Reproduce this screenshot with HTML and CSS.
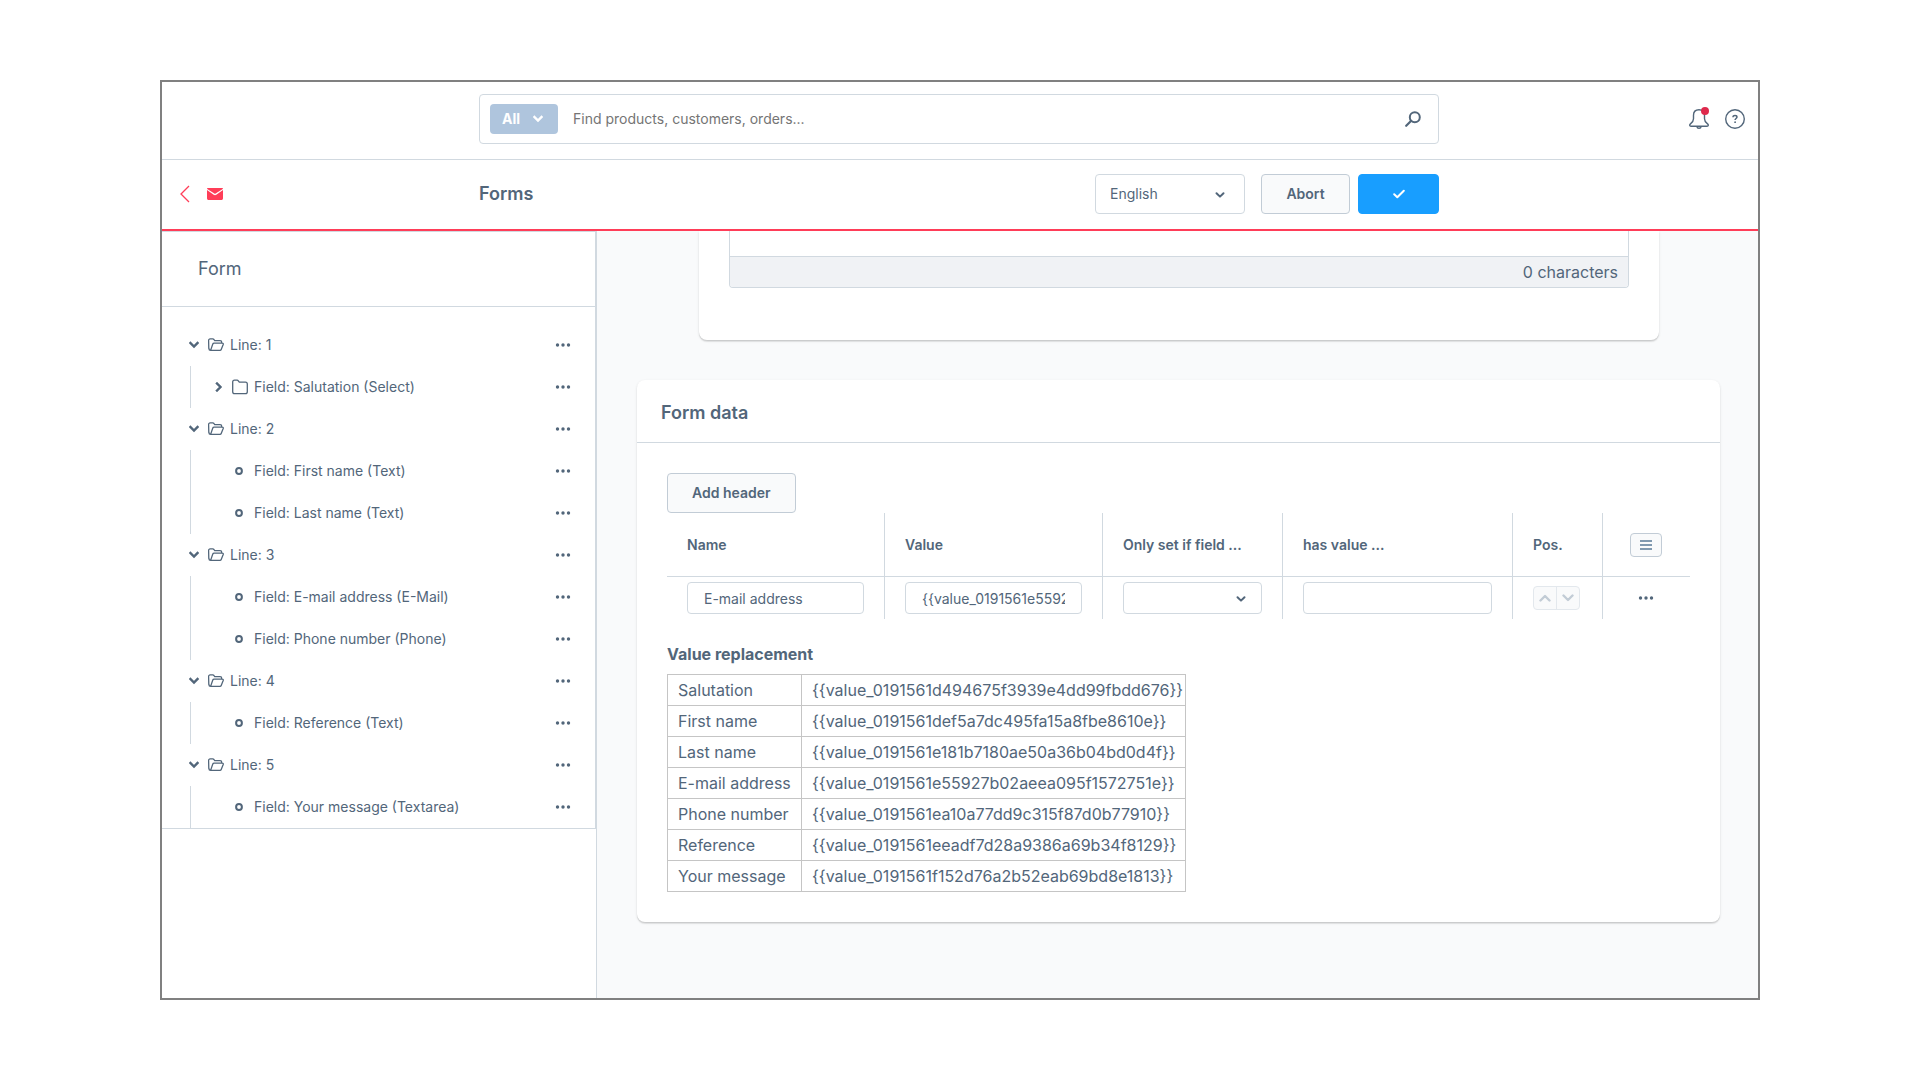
FILE: index.html
```html
<!DOCTYPE html>
<html lang="en">
<head>
<meta charset="utf-8">
<title>Forms</title>
<link rel="stylesheet" href="styles.css">
</head>
<body>
<svg class="sprite" aria-hidden="true">
  <symbol id="chevron" viewBox="0 0 10 8"><path d="M1.5 2 5 5.5 8.5 2" fill="none" stroke="currentColor" stroke-width="2.4" stroke-linecap="square"/></symbol>
  <symbol id="chevron-thin" viewBox="0 0 10 8"><path d="M1.5 2.2 5 5.6 8.5 2.2" fill="none" stroke="currentColor" stroke-width="2" stroke-linecap="round" stroke-linejoin="round"/></symbol>
  <symbol id="chevron-wide" viewBox="0 0 12 8"><path d="M1.5 1.5 6 6 10.5 1.5" fill="none" stroke="currentColor" stroke-width="2.4" stroke-linecap="round" stroke-linejoin="round"/></symbol>
  <symbol id="dots" viewBox="0 0 16 4"><circle cx="2.5" cy="2" r="1.7"/><circle cx="8" cy="2" r="1.7"/><circle cx="13.5" cy="2" r="1.7"/></symbol>
  <symbol id="folder-open" viewBox="0 0 16 14"><path d="M2.6 12.4C1.4 12.4.9 11.400.8 10.400L.6 2.600C.6 1.500 1.200.9 2.200.9h2.600c.5 0 .8.2 1.100.6l.8 1.200h5.400c1 0 1.600.6 1.600 1.600v.8M2.600 12.400h9.400c.6 0 1-.3 1.200-.9l2-4.900c.3-.8-.1-1.500-.9-1.500H6.100c-.7 0-1.100.3-1.300.9L2.600 12.400z" fill="none" stroke="currentColor" stroke-width="1.300" stroke-linejoin="round"/></symbol>
  <symbol id="folder" viewBox="0 0 16 16"><path d="M.7 3.100C.7 1.800 1.300 1.200 2.500 1.200h2.600c.6 0 .9.200 1.200.600l1 1.400h6.200c1.200 0 1.800.700 1.800 1.900v7.700c0 1.200-.6 1.900-1.800 1.900H2.500c-1.200 0-1.800-.7-1.800-1.900z" fill="none" stroke="currentColor" stroke-width="1.300" stroke-linejoin="round"/></symbol>
  <symbol id="bullet" viewBox="0 0 8 8"><circle cx="4" cy="4" r="2.900" fill="none" stroke="currentColor" stroke-width="2"/></symbol>
</svg>

<div class="frame">
  <header class="topbar">
    <form class="search" role="search">
      <button class="search-type" type="button">All <svg class="ic-chevron"><use href="#chevron"/></svg></button>
      <input class="search-input" type="search" aria-label="Search" placeholder="Find products, customers, orders...">
      <button class="icon-button" type="button" aria-label="Search">
        <svg class="ic-16" viewBox="0 0 16 16"><circle cx="9.800" cy="6.200" r="5" fill="none" stroke="currentColor" stroke-width="2"/><path d="M6.200 9.800 1.200 14.800" stroke="currentColor" stroke-width="2.200" stroke-linecap="round"/></svg>
      </button>
    </form>
    <div class="topbar-actions">
      <button class="icon-button bell" type="button" aria-label="Notifications">
        <svg class="ic-20" viewBox="0 0 20 20"><g fill="none" stroke="currentColor" stroke-width="1.400" stroke-linejoin="round"><path d="M10 .800C6.500.800 4.500 3 4.500 6.200v3.600c0 2.400-1.200 3.600-2.800 4.800-1.500 1.100-1.200 2.600.3 2.600h16c1.500 0 1.800-1.500.3-2.600-1.600-1.200-2.800-2.400-2.800-4.800V6.200C15.500 3 13.500.800 10 .800z"/><path d="M7.800 17.300c.2 1.300 1 2 2.200 2s2-.7 2.200-2"/></g></svg>
        <span class="badge"></span>
      </button>
      <button class="icon-button" type="button" aria-label="Help">
        <svg class="ic-20" viewBox="0 0 20 20"><g fill="none" stroke="currentColor"><circle cx="10" cy="10" r="9.300" stroke-width="1.400"/><path d="M8 8.200C8 7.100 8.800 6.400 10 6.400s2 .7 2 1.700c0 1.400-1.900 1.400-1.900 2.900" stroke-width="1.500"/></g><circle cx="10.100" cy="13.200" r=".9"/></svg>
      </button>
    </div>
  </header>

  <div class="pagehead">
    <div class="pagehead-nav">
      <a href="#" aria-label="Back"><svg class="ic-back" viewBox="0 0 10 18"><path d="M9 1 1 9l8 8" fill="none" stroke="currentColor" stroke-width="1.300"/></svg></a>
      <svg class="ic-mail" viewBox="0 0 16 12"><path d="M.2 0h15.600v.900L8.600 5.500c-.4.300-.8.300-1.200 0L.2.900z"/><path d="M0 2.100 6.700 6.800c.8.600 1.800.6 2.600 0L16 2.100V10.200c0 1.200-.6 1.800-1.800 1.800H1.800C.6 12 0 11.400 0 10.200z"/></svg>
    </div>
    <div class="pagehead-main">
      <h1>Forms</h1>
      <div class="select-wrap language">
        <select aria-label="Language"><option>English</option></select>
        <svg class="ic-chevron"><use href="#chevron-thin"/></svg>
      </div>
      <button class="btn abort" type="button">Abort</button>
      <button class="btn primary" type="button" aria-label="Save"><svg class="ic-check" viewBox="0 0 12 10"><path d="M1.200 5.300 4.300 8.300 10.800 1.700" fill="none" stroke="currentColor" stroke-width="2" stroke-linecap="round" stroke-linejoin="round"/></svg></button>
    </div>
  </div>

  <div class="body">
    <nav class="sidebar" aria-label="Form structure">
      <div class="tree-card">
        <h2>Form</h2>
        <ul class="tree">
          <li>
            <div class="row"><svg class="ic-chevron"><use href="#chevron"/></svg><svg class="ic-folder"><use href="#folder-open"/></svg><span>Line: 1</span><button class="more" type="button" aria-label="More"><svg><use href="#dots"/></svg></button></div>
            <ul>
              <li class="row"><svg class="ic-chevron closed"><use href="#chevron"/></svg><svg class="ic-16"><use href="#folder"/></svg><span>Field: Salutation (Select)</span><button class="more" type="button" aria-label="More"><svg><use href="#dots"/></svg></button></li>
            </ul>
          </li>
          <li>
            <div class="row"><svg class="ic-chevron"><use href="#chevron"/></svg><svg class="ic-folder"><use href="#folder-open"/></svg><span>Line: 2</span><button class="more" type="button" aria-label="More"><svg><use href="#dots"/></svg></button></div>
            <ul>
              <li class="row leaf"><svg class="ic-bullet"><use href="#bullet"/></svg><span>Field: First name (Text)</span><button class="more" type="button" aria-label="More"><svg><use href="#dots"/></svg></button></li>
              <li class="row leaf"><svg class="ic-bullet"><use href="#bullet"/></svg><span>Field: Last name (Text)</span><button class="more" type="button" aria-label="More"><svg><use href="#dots"/></svg></button></li>
            </ul>
          </li>
          <li>
            <div class="row"><svg class="ic-chevron"><use href="#chevron"/></svg><svg class="ic-folder"><use href="#folder-open"/></svg><span>Line: 3</span><button class="more" type="button" aria-label="More"><svg><use href="#dots"/></svg></button></div>
            <ul>
              <li class="row leaf"><svg class="ic-bullet"><use href="#bullet"/></svg><span>Field: E-mail address (E-Mail)</span><button class="more" type="button" aria-label="More"><svg><use href="#dots"/></svg></button></li>
              <li class="row leaf"><svg class="ic-bullet"><use href="#bullet"/></svg><span>Field: Phone number (Phone)</span><button class="more" type="button" aria-label="More"><svg><use href="#dots"/></svg></button></li>
            </ul>
          </li>
          <li>
            <div class="row"><svg class="ic-chevron"><use href="#chevron"/></svg><svg class="ic-folder"><use href="#folder-open"/></svg><span>Line: 4</span><button class="more" type="button" aria-label="More"><svg><use href="#dots"/></svg></button></div>
            <ul>
              <li class="row leaf"><svg class="ic-bullet"><use href="#bullet"/></svg><span>Field: Reference (Text)</span><button class="more" type="button" aria-label="More"><svg><use href="#dots"/></svg></button></li>
            </ul>
          </li>
          <li>
            <div class="row"><svg class="ic-chevron"><use href="#chevron"/></svg><svg class="ic-folder"><use href="#folder-open"/></svg><span>Line: 5</span><button class="more" type="button" aria-label="More"><svg><use href="#dots"/></svg></button></div>
            <ul>
              <li class="row leaf"><svg class="ic-bullet"><use href="#bullet"/></svg><span>Field: Your message (Textarea)</span><button class="more" type="button" aria-label="More"><svg><use href="#dots"/></svg></button></li>
            </ul>
          </li>
        </ul>
      </div>
    </nav>

    <main class="content">
      <section class="card editor-card">
        <div class="editor">
          <textarea aria-label="Text"></textarea>
          <div class="editor-foot">0 characters</div>
        </div>
      </section>

      <section class="card">
        <h2 class="card-title">Form data</h2>
        <div class="card-body">
          <button class="btn" type="button">Add header</button>
          <table class="grid">
            <colgroup><col class="w-text"><col class="w-text"><col class="w-field"><col class="w-value"><col class="w-pos"><col></colgroup>
            <thead>
              <tr><th>Name</th><th>Value</th><th>Only set if field ...</th><th>has value ...</th><th>Pos.</th>
                <th class="actions"><button class="btn mini" type="button" aria-label="Columns"><svg class="ic-menu" viewBox="0 0 12 12"><path d="M0 2h12M0 6h12M0 10h12" stroke="currentColor" stroke-width="2"/></svg></button></th></tr>
            </thead>
            <tbody>
              <tr>
                <td><input class="field" type="text" aria-label="Name" value="E-mail address"></td>
                <td><input class="field" type="text" aria-label="Value" value="{{value_0191561e55927b02aeea095f1572751e}}"></td>
                <td><div class="select-wrap"><select class="field" aria-label="Only set if field"><option></option></select><svg class="ic-chevron"><use href="#chevron-thin"/></svg></div></td>
                <td><input class="field" type="text" aria-label="has value"></td>
                <td><div class="pos"><button type="button" disabled aria-label="Up"><svg class="up"><use href="#chevron-wide"/></svg></button><button type="button" disabled aria-label="Down"><svg><use href="#chevron-wide"/></svg></button></div></td>
                <td class="actions"><button class="more" type="button" aria-label="More"><svg><use href="#dots"/></svg></button></td>
              </tr>
            </tbody>
          </table>

          <h3>Value replacement</h3>
          <table class="values">
            <colgroup><col class="w-label"><col class="w-token"></colgroup>
            <tbody>
              <tr><td>Salutation</td><td>{{value_0191561d494675f3939e4dd99fbdd676}}</td></tr>
              <tr><td>First name</td><td>{{value_0191561def5a7dc495fa15a8fbe8610e}}</td></tr>
              <tr><td>Last name</td><td>{{value_0191561e181b7180ae50a36b04bd0d4f}}</td></tr>
              <tr><td>E-mail address</td><td>{{value_0191561e55927b02aeea095f1572751e}}</td></tr>
              <tr><td>Phone number</td><td>{{value_0191561ea10a77dd9c315f87d0b77910}}</td></tr>
              <tr><td>Reference</td><td>{{value_0191561eeadf7d28a9386a69b34f8129}}</td></tr>
              <tr><td>Your message</td><td>{{value_0191561f152d76a2b52eab69bd8e1813}}</td></tr>
            </tbody>
          </table>
        </div>
      </section>
    </main>
  </div>
</div>
</body>
</html>
```
FILE: styles.css
```css
:root {
  --text: #52667a;
  --line: #d1d9e0;
  --line-dark: #c2ccd6;
  --red: #ff3d58;
  --bg: #f9fafb;
}

* { box-sizing: border-box; }

body {
  margin: 0;
  min-height: 100vh;
  padding: 80px 160px;
  display: flex;
  background: #fff;
  color: var(--text);
  font: 14px/20px Inter, "Liberation Sans", sans-serif;
}

svg { display: block; flex: none; fill: currentColor; }
.sprite { position: absolute; width: 0; height: 0; }
button, input, select, textarea { font: inherit; color: inherit; margin: 0; }
button { display: flex; align-items: center; justify-content: center; padding: 0; border: 0; background: none; }
h1, h2, h3 { margin: 0; }
ul { margin: 0; padding: 0; list-style: none; }

.ic-16 { width: 16px; height: 16px; }
.ic-20 { width: 20px; height: 20px; }
.ic-chevron { width: 10px; height: 8px; }
.ic-folder { width: 16px; height: 14px; }
.ic-bullet { width: 8px; height: 8px; }
.ic-back { width: 10px; height: 18px; }
.ic-mail { width: 16px; height: 12px; }
.ic-check { width: 12px; height: 10px; }
.ic-menu { width: 12px; height: 12px; }

.frame {
  flex: 1;
  min-width: 0;
  display: flex;
  flex-direction: column;
  border: 2px solid #808080;
}

/* Global search bar */
.topbar, .pagehead {
  display: grid;
  grid-template-columns: 1fr minmax(0, 960px) 1fr;
  align-items: center;
  padding: 0 2px 2px 0;
}
.topbar { height: 78px; padding-bottom: 3px; border-bottom: 1px solid var(--line); }
.search {
  grid-column: 2;
  display: flex;
  align-items: center;
  height: 50px;
  padding: 0 17px 0 10px;
  border: 1px solid var(--line);
  border-radius: 4px;
}
.search-type {
  height: 30px;
  padding: 0 15px 0 12px;
  gap: 13px;
  border-radius: 4px;
  background: #afc5dd;
  color: #fff;
  font-weight: 700;
}
.search-input {
  flex: 1;
  min-width: 0;
  padding: 0 15px;
  border: 0;
  outline: 0;
  background: none;
}
.search-input::placeholder { color: #757575; opacity: 1; }
.topbar-actions { display: flex; justify-content: flex-end; gap: 16px; padding-right: 11px; }
.bell { position: relative; }
.badge { position: absolute; top: -2px; right: 0; width: 8px; height: 8px; border-radius: 50%; background: #de294c; }

/* Page heading */
.pagehead { height: 71px; border-bottom: 2px solid var(--red); }
.pagehead-nav { display: flex; align-items: center; gap: 17px; padding-left: 18px; color: var(--red); }
.pagehead-nav a { color: inherit; }
.pagehead-main { display: flex; align-items: center; }
h1 { flex: 1; font-size: 18px; font-weight: 600; line-height: 24px; }
.select-wrap { position: relative; }
.select-wrap select {
  appearance: none;
  width: 100%;
  padding: 0 14px;
  border: 1px solid var(--line);
  border-radius: 4px;
  background: #fff;
}
.select-wrap svg { position: absolute; top: 50%; right: 20px; margin-top: -3px; pointer-events: none; }
.language { width: 150px; margin-right: 16px; }
.language select { height: 40px; display: block; }
.btn {
  height: 40px;
  padding: 0 24px;
  border: 1px solid var(--line-dark);
  border-radius: 4px;
  background: var(--bg);
  font-weight: 600;
}
.abort { width: 89px; }
.primary { width: 81px; margin-left: 8px; border-color: #189eff; background: #189eff; color: #fff; }

.body { flex: 1; display: flex; }

/* Tree */
.sidebar { width: 435px; flex: none; border-right: 1px solid var(--line); }
.tree-card { border: solid var(--line); border-width: 1px 1px 1px 0; }
.tree-card h2 {
  padding: 25px 36px;
  border-bottom: 1px solid var(--line);
  font-size: 18px;
  font-weight: 400;
  line-height: 24px;
}
.tree { padding: 17px 22px 0 27px; }
.row { display: flex; align-items: center; height: 42px; }
.row .ic-chevron { margin-right: 9px; }
.row .ic-folder, .row .ic-16 { margin-right: 6px; }
.row span { flex: 1; }
.tree ul { margin-left: 1px; border-left: 1px solid var(--line); }
.tree ul .row { padding-left: 23px; }
.tree ul .closed { transform: rotate(-90deg); margin-right: 8px; }
.tree ul .leaf { padding-left: 44px; }
.leaf .ic-bullet { margin-right: 11px; }
.more { width: 20px; height: 20px; }
.more svg { width: 16px; height: 4px; }

/* Cards */
.content { flex: 1; min-width: 0; padding: 0 38px 40px 40px; background: var(--bg); }
.card {
  border-radius: 8px;
  background: #fff;
  box-shadow: 0 1px 1px rgba(0, 0, 0, .08), 0 2px 1px rgba(0, 0, 0, .06), 0 1px 3px rgba(0, 0, 0, .1);
}
.editor-card { margin: 0 61px 40px 62px; padding: 0 30px 52px; border-radius: 0 0 8px 8px; clip-path: inset(0 -4px -4px); }
.editor { border: solid var(--line); border-width: 0 1px 1px; border-radius: 0 0 4px 4px; overflow: hidden; }
.editor textarea { display: block; width: 100%; height: 25px; border: 0; resize: none; outline: 0; }
.editor-foot {
  padding: 5px 10px;
  border-top: 1px solid var(--line);
  background: #f0f2f5;
  font-size: 16px;
  text-align: right;
}
.card-title { padding: 21px 24px 17px; border-bottom: 1px solid var(--line); font-size: 18px; font-weight: 600; line-height: 24px; }
.card-body { padding: 30px; }

.grid { width: 100%; table-layout: fixed; border-collapse: separate; border-spacing: 0; }
.w-text { width: 218px; }
.w-field { width: 180px; }
.w-value { width: 230px; }
.w-pos { width: 90px; }
.grid th, .grid td { padding: 0 20px; border-right: 1px solid var(--line); text-align: left; vertical-align: middle; }
.grid th { height: 64px; border-bottom: 1px solid var(--line); font-weight: 600; }
.grid td { height: 42px; }
.grid .actions { padding: 0 2px 0 0; border-right: 0; }
.actions button { margin: 0 auto; }
.mini { width: 32px; height: 24px; padding: 0; color: #8099b0; }
.field { display: block; width: 100%; height: 32px; padding: 0 16px; border: 1px solid var(--line); border-radius: 4px; background: #fff; }
.grid .select-wrap svg { right: 16px; }
.pos { display: flex; width: 47px; border: 1px solid #e3e8ed; border-radius: 4px; background: var(--bg); color: #c2ccd6; }
.pos button { flex: 1; height: 22px; color: inherit; }
.pos button + button { border-left: 1px solid #e3e8ed; }
.pos svg { width: 12px; height: 8px; }
.pos .up { transform: rotate(180deg); }

h3 { margin: 24px 0 8px; font-size: 16px; font-weight: 700; line-height: 23px; }
.values { width: 519px; table-layout: fixed; border-collapse: collapse; font-size: 16px; }
.w-label { width: 134px; }
.values td { padding: 5px 0 5px 10px; border: 1px solid #c5c5c5; white-space: nowrap; }
```
